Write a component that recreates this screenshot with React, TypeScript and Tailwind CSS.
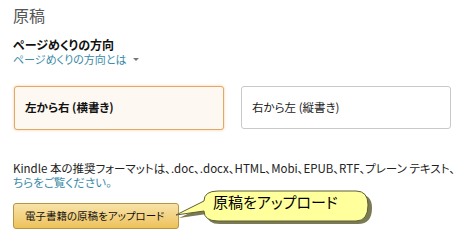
import React from "react";

export default function App() {
  const jp = { fontFamily: '"Noto Sans CJK JP", "Noto Sans", sans-serif' };
  return (
    <div className="relative w-[454px] h-[240px] bg-white overflow-hidden text-[#111] [font-feature-settings:'palt']" style={jp}>
      <div className="pl-[13px] pt-[5px]">
        <div className="text-[16px] leading-[20px] text-[#555]">原稿</div>
        <div className="mt-[13px] text-[12px] leading-[14px] font-bold text-[#111]">ページめくりの方向</div>
        <div className="text-[11px] leading-[14px] text-[#3a8aa8] flex items-center gap-[6px]">
          ページめくりの方向とは
          <span className="inline-block w-0 h-0 border-l-[3px] border-r-[3px] border-t-[3px] border-l-transparent border-r-transparent border-t-[#777]" />
        </div>
      </div>
      <div className="flex gap-[17px] pl-[14px] mt-[20px]">
        <div className="w-[210px] h-[44px] rounded-[3px] border border-[#e3a768] bg-[#fdf8f1] shadow-[0_0_3px_#f3c99a] flex items-center pl-[10px] text-[11.5px] font-bold">
          左から右 (横書き)
        </div>
        <div className="w-[210px] h-[43px] rounded-[3px] border border-[#c9c9c9] bg-white flex items-center pl-[10px] text-[11.5px] text-[#222]">
          右から左 (縦書き)
        </div>
      </div>
      <div className="pl-[13px] mt-[31px] text-[11.5px] leading-[14px] whitespace-nowrap text-[#222]">
        <div>Kindle 本の推奨フォーマットは、.doc、.docx、HTML、Mobi、EPUB、RTF、プレーン テキスト、</div>
        <div className="text-[#3a8aa8]">ちらをご覧ください。</div>
      </div>
      <div className="pl-[13px] mt-[14px]">
        <div className="w-[166px] h-[26px] rounded-[3px] border border-[#b89445] bg-gradient-to-b from-[#f8e3a8] to-[#eec25a] flex items-center pl-[11px] text-[10.5px] whitespace-nowrap text-[#111]">
          電子書籍の原稿をアップロード
        </div>
      </div>
      <svg className="absolute left-0 top-0" width="454" height="240">
        <path
          d="M 218 192 L 356 192 Q 370 192 370 206 Q 370 222 356 222 L 218 222 Q 205 222 205 212 L 177 216 L 205 203 Q 205 192 218 192 Z"
          fill="#7a7a55"
          transform="translate(2,2)"
        />
        <path
          d="M 218 191 L 356 191 Q 368 191 368 205 Q 368 221 356 221 L 218 221 Q 204 221 204 211 L 176 215 L 204 201 Q 204 191 218 191 Z"
          fill="#ffff9c"
          stroke="#5e5e3a"
          strokeWidth="1"
        />
      </svg>
      <div className="absolute left-[213px] top-[192px] text-[15px] leading-[20px] text-black">原稿をアップロード</div>
    </div>
  );
}
